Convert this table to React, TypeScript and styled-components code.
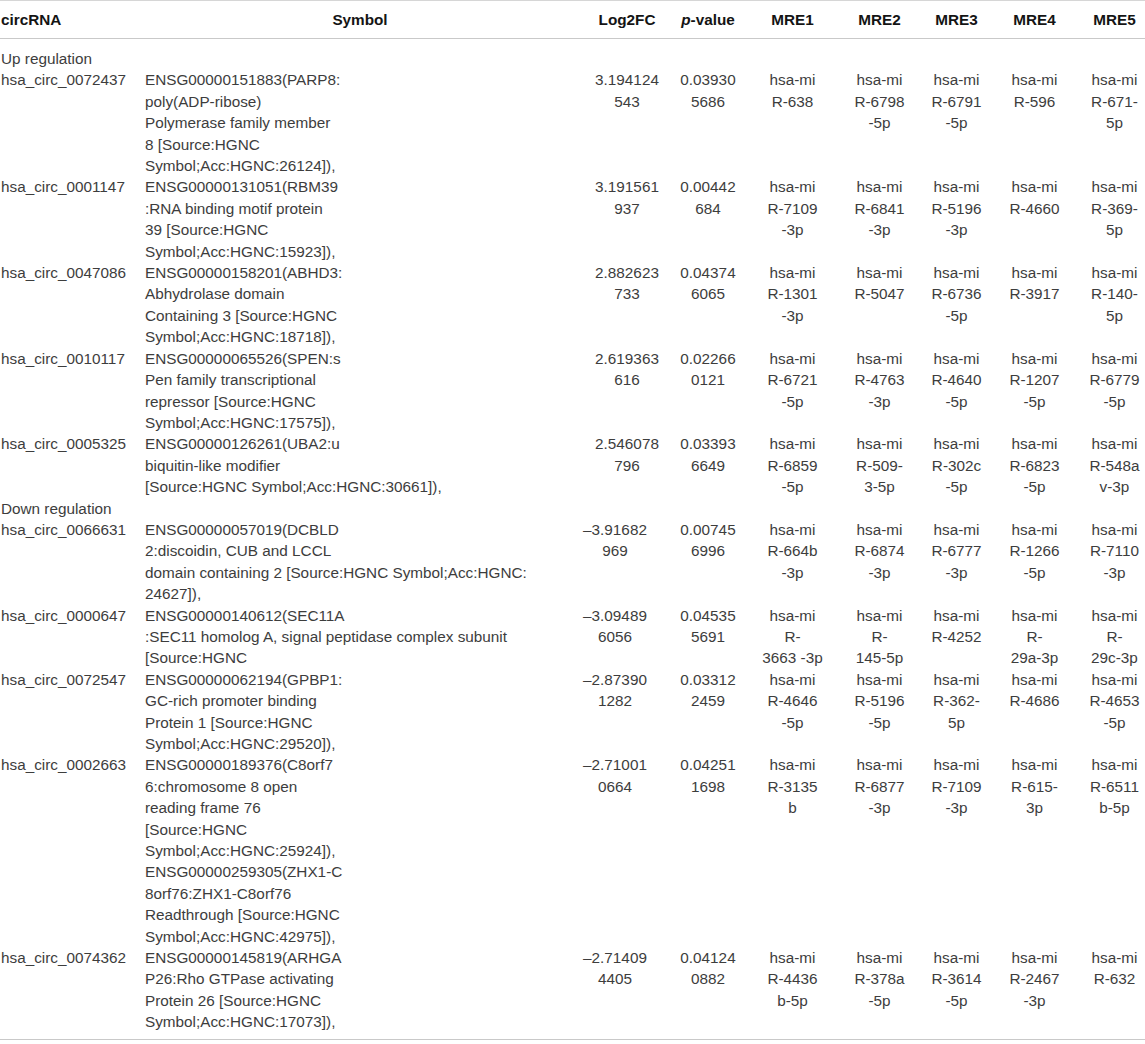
import React from "react";
import styled, { createGlobalStyle } from "styled-components";

const GlobalStyle = createGlobalStyle`
  html, body { margin: 0; padding: 0; background: #ffffff; overflow: hidden; }
  body { font-family: "Liberation Sans", Arial, Helvetica, sans-serif; }
`;

type Align = "left" | "center";

interface Row {
  id: string;
  symbol: string[];
  log: string[];
  p: string[];
  mre: string[][];
}

interface Section {
  title: string;
  rows: Row[];
}

const sections: Section[] = [
  {
    title: "Up regulation",
    rows: [
      {
        id: "hsa_circ_0072437",
        symbol: ["ENSG00000151883(PARP8:", "poly(ADP-ribose)", "Polymerase family member", "8 [Source:HGNC", "Symbol;Acc:HGNC:26124]),"],
        log: ["3.194124", "543"],
        p: ["0.03930", "5686"],
        mre: [["hsa-mi", "R-638"], ["hsa-mi", "R-6798", "-5p"], ["hsa-mi", "R-6791", "-5p"], ["hsa-mi", "R-596"], ["hsa-mi", "R-671-", "5p"]],
      },
      {
        id: "hsa_circ_0001147",
        symbol: ["ENSG00000131051(RBM39", ":RNA binding motif protein", "39 [Source:HGNC", "Symbol;Acc:HGNC:15923]),"],
        log: ["3.191561", "937"],
        p: ["0.00442", "684"],
        mre: [["hsa-mi", "R-7109", "-3p"], ["hsa-mi", "R-6841", "-3p"], ["hsa-mi", "R-5196", "-3p"], ["hsa-mi", "R-4660"], ["hsa-mi", "R-369-", "5p"]],
      },
      {
        id: "hsa_circ_0047086",
        symbol: ["ENSG00000158201(ABHD3:", "Abhydrolase domain", "Containing 3 [Source:HGNC", "Symbol;Acc:HGNC:18718]),"],
        log: ["2.882623", "733"],
        p: ["0.04374", "6065"],
        mre: [["hsa-mi", "R-1301", "-3p"], ["hsa-mi", "R-5047"], ["hsa-mi", "R-6736", "-5p"], ["hsa-mi", "R-3917"], ["hsa-mi", "R-140-", "5p"]],
      },
      {
        id: "hsa_circ_0010117",
        symbol: ["ENSG00000065526(SPEN:s", "Pen family transcriptional", "repressor [Source:HGNC", "Symbol;Acc:HGNC:17575]),"],
        log: ["2.619363", "616"],
        p: ["0.02266", "0121"],
        mre: [["hsa-mi", "R-6721", "-5p"], ["hsa-mi", "R-4763", "-3p"], ["hsa-mi", "R-4640", "-5p"], ["hsa-mi", "R-1207", "-5p"], ["hsa-mi", "R-6779", "-5p"]],
      },
      {
        id: "hsa_circ_0005325",
        symbol: ["ENSG00000126261(UBA2:u", "biquitin-like modifier", "[Source:HGNC Symbol;Acc:HGNC:30661]),"],
        log: ["2.546078", "796"],
        p: ["0.03393", "6649"],
        mre: [["hsa-mi", "R-6859", "-5p"], ["hsa-mi", "R-509-", "3-5p"], ["hsa-mi", "R-302c", "-5p"], ["hsa-mi", "R-6823", "-5p"], ["hsa-mi", "R-548a", "v-3p"]],
      },
    ],
  },
  {
    title: "Down regulation",
    rows: [
      {
        id: "hsa_circ_0066631",
        symbol: ["ENSG00000057019(DCBLD", "2:discoidin, CUB and LCCL", "domain containing 2 [Source:HGNC Symbol;Acc:HGNC:", "24627]),"],
        log: ["\u20133.91682", "969"],
        p: ["0.00745", "6996"],
        mre: [["hsa-mi", "R-664b", "-3p"], ["hsa-mi", "R-6874", "-3p"], ["hsa-mi", "R-6777", "-3p"], ["hsa-mi", "R-1266", "-5p"], ["hsa-mi", "R-7110", "-3p"]],
      },
      {
        id: "hsa_circ_0000647",
        symbol: ["ENSG00000140612(SEC11A", ":SEC11 homolog A, signal peptidase complex subunit", "[Source:HGNC"],
        log: ["\u20133.09489", "6056"],
        p: ["0.04535", "5691"],
        mre: [["hsa-mi", "R-", "3663 -3p"], ["hsa-mi", "R-", "145-5p"], ["hsa-mi", "R-4252"], ["hsa-mi", "R-", "29a-3p"], ["hsa-mi", "R-", "29c-3p"]],
      },
      {
        id: "hsa_circ_0072547",
        symbol: ["ENSG00000062194(GPBP1:", "GC-rich promoter binding", "Protein 1 [Source:HGNC", "Symbol;Acc:HGNC:29520]),"],
        log: ["\u20132.87390", "1282"],
        p: ["0.03312", "2459"],
        mre: [["hsa-mi", "R-4646", "-5p"], ["hsa-mi", "R-5196", "-5p"], ["hsa-mi", "R-362-", "5p"], ["hsa-mi", "R-4686"], ["hsa-mi", "R-4653", "-5p"]],
      },
      {
        id: "hsa_circ_0002663",
        symbol: [
          "ENSG00000189376(C8orf7",
          "6:chromosome 8 open",
          "reading frame 76",
          "[Source:HGNC",
          "Symbol;Acc:HGNC:25924]),",
          "ENSG00000259305(ZHX1-C",
          "8orf76:ZHX1-C8orf76",
          "Readthrough [Source:HGNC",
          "Symbol;Acc:HGNC:42975]),",
        ],
        log: ["\u20132.71001", "0664"],
        p: ["0.04251", "1698"],
        mre: [["hsa-mi", "R-3135", "b"], ["hsa-mi", "R-6877", "-3p"], ["hsa-mi", "R-7109", "-3p"], ["hsa-mi", "R-615-", "3p"], ["hsa-mi", "R-6511", "b-5p"]],
      },
      {
        id: "hsa_circ_0074362",
        symbol: ["ENSG00000145819(ARHGA", "P26:Rho GTPase activating", "Protein 26 [Source:HGNC", "Symbol;Acc:HGNC:17073]),"],
        log: ["\u20132.71409", "4405"],
        p: ["0.04124", "0882"],
        mre: [["hsa-mi", "R-4436", "b-5p"], ["hsa-mi", "R-378a", "-5p"], ["hsa-mi", "R-3614", "-5p"], ["hsa-mi", "R-2467", "-3p"], ["hsa-mi", "R-632"]],
      },
    ],
  },
];

const columnWidths = [140, 440, 94, 68, 101, 73, 81, 75, 85];

const Frame = styled.div`
  width: 1145px;
  overflow: hidden;
`;

const Table = styled.table`
  width: 1157px;
  table-layout: fixed;
  border-collapse: collapse;
  border-spacing: 0;
  font-size: 15.3px;
  line-height: 21.4px;
  color: #3d3d3d;
  border-top: 1px solid #d6d6d6;
  border-bottom: 1px solid #c9c9c9;
`;

const Col = styled.col<{ $w: number }>`
  width: ${(p) => p.$w}px;
`;

const HeadRow = styled.tr`
  height: 38px;
`;

const HeadCell = styled.th<{ $align: Align; $padLeft?: number }>`
  padding: 0 0 0 ${(p) => p.$padLeft ?? 0}px;
  font-weight: 700;
  color: #141414;
  text-align: ${(p) => p.$align};
  vertical-align: middle;
  white-space: nowrap;
  border-bottom: 1px solid #c9c9c9;
`;

const Italic = styled.i`
  font-style: italic;
`;

const Body = styled.tbody`
  & > tr:first-child > td {
    padding-top: 9px;
  }
  & > tr:last-child > td {
    padding-bottom: 6px;
  }
`;

const Cell = styled.td<{ $align: Align; $padLeft?: number; $padRight?: number }>`
  padding: 0 ${(p) => p.$padRight ?? 0}px 0 ${(p) => p.$padLeft ?? 0}px;
  text-align: ${(p) => p.$align};
  vertical-align: top;
  white-space: nowrap;
`;

const SectionCell = styled.td`
  padding: 0 0 0 1px;
  text-align: left;
  vertical-align: top;
  white-space: nowrap;
`;

const Line = styled.span`
  display: block;
`;

const Lines: React.FC<{ items: string[] }> = ({ items }) => (
  <>
    {items.map((t, i) => (
      <Line key={i}>{t}</Line>
    ))}
  </>
);

export default function App() {
  return (
    <Frame>
      <GlobalStyle />
      <Table>
        <colgroup>
          {columnWidths.map((w, i) => (
            <Col key={i} $w={w} />
          ))}
        </colgroup>
        <thead>
          <HeadRow>
            <HeadCell $align="left" $padLeft={1}>circRNA</HeadCell>
            <HeadCell $align="center">Symbol</HeadCell>
            <HeadCell $align="center">Log2FC</HeadCell>
            <HeadCell $align="center">
              <Italic>p</Italic>-value
            </HeadCell>
            <HeadCell $align="center">MRE1</HeadCell>
            <HeadCell $align="center">MRE2</HeadCell>
            <HeadCell $align="center">MRE3</HeadCell>
            <HeadCell $align="center">MRE4</HeadCell>
            <HeadCell $align="center">MRE5</HeadCell>
          </HeadRow>
        </thead>
        <Body>
          {sections.map((s) => (
            <React.Fragment key={s.title}>
              <tr>
                <SectionCell colSpan={9}>{s.title}</SectionCell>
              </tr>
              {s.rows.map((r) => {
                const negative = r.log[0].startsWith("\u2013");
                return (
                  <tr key={r.id}>
                    <Cell $align="left" $padLeft={1}>{r.id}</Cell>
                    <Cell $align="left" $padLeft={5}>
                      <Lines items={r.symbol} />
                    </Cell>
                    <Cell $align="center" $padRight={negative ? 24 : 0}>
                      <Lines items={r.log} />
                    </Cell>
                    <Cell $align="center">
                      <Lines items={r.p} />
                    </Cell>
                    {r.mre.map((m, i) => (
                      <Cell key={i} $align="center">
                        <Lines items={m} />
                      </Cell>
                    ))}
                  </tr>
                );
              })}
            </React.Fragment>
          ))}
        </Body>
      </Table>
    </Frame>
  );
}
